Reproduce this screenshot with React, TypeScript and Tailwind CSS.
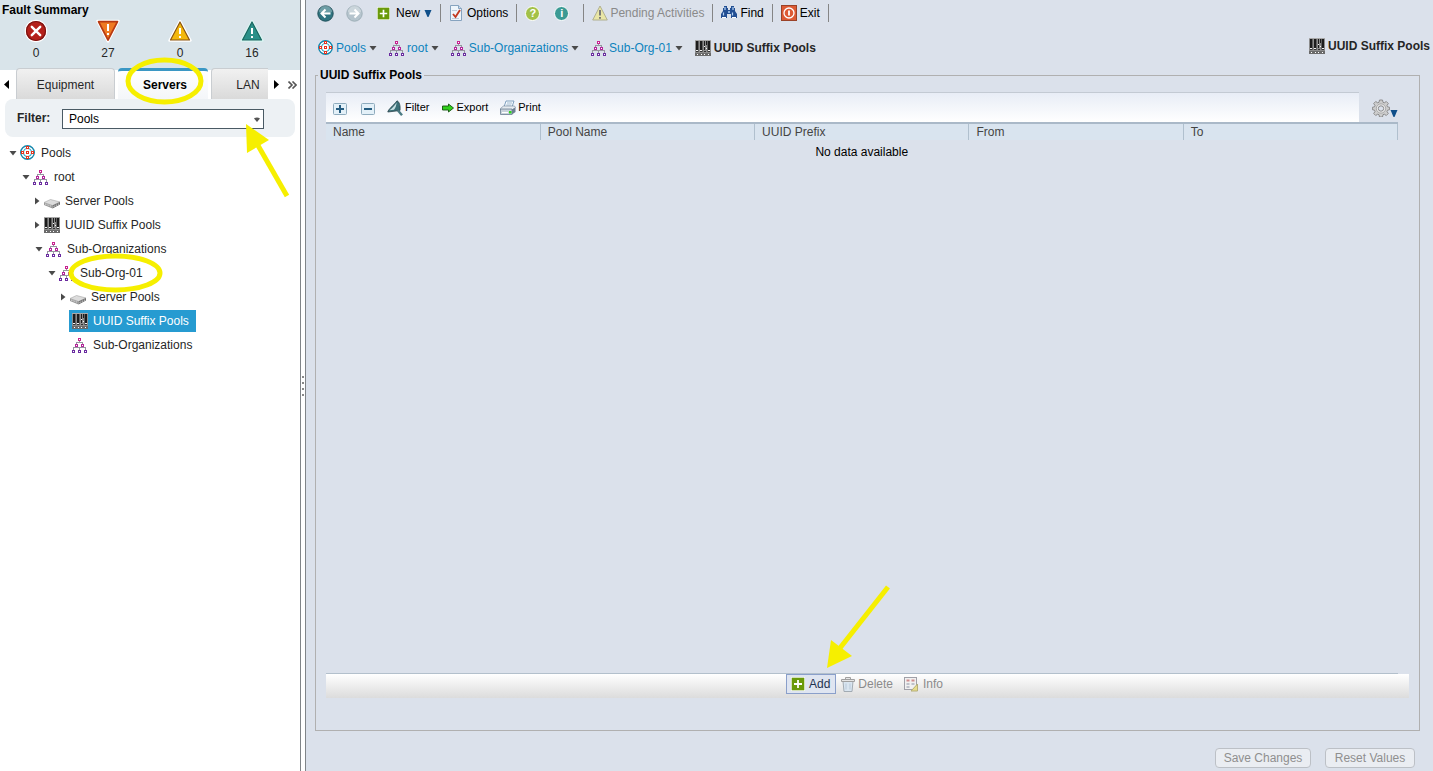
import { useState } from "react";
import type { ReactNode } from "react";

const tree = [
  { label: "Pools", icon: "pools", indent: "pl-[9px]", arrow: "down" },
  { label: "root", icon: "org", indent: "pl-[22px]", arrow: "down" },
  { label: "Server Pools", icon: "server", indent: "pl-[33px]", arrow: "right" },
  { label: "UUID Suffix Pools", icon: "uuid", indent: "pl-[33px]", arrow: "right" },
  { label: "Sub-Organizations", icon: "org", indent: "pl-[35px]", arrow: "down" },
  { label: "Sub-Org-01", icon: "org", indent: "pl-[48px]", arrow: "down" },
  { label: "Server Pools", icon: "server", indent: "pl-[59px]", arrow: "right" },
  { label: "UUID Suffix Pools", icon: "uuid", indent: "pl-[61px]", arrow: "" },
  { label: "Sub-Organizations", icon: "org", indent: "pl-[61px]", arrow: "" },
];

const columns = ["Name", "Pool Name", "UUID Prefix", "From", "To"];

function PoolsIcon() {
  return (
    <svg width="16" height="16" viewBox="0 0 16 16" className="shrink-0">
      <circle cx="7.5" cy="7.5" r="6.800" fill="#fff" stroke="#1588ad" strokeWidth="1.400" />
      <circle cx="7.5" cy="7.5" r="4" fill="none" stroke="#2aa3c4" strokeWidth="1.200" />
      <g fill="#e8321c">
        <path d="M6 1h3v3H6zM6 11h3v3H6zM1 6h3v3H1zM11 6h3v3h-3zM6 6h3v3H6z" />
      </g>
      <path d="M7 2h1v1H7zM7 12h1v1H7zM2 7h1v1H2zM12 7h1v1h-1zM7 7h1v1H7z" fill="#fff" />
    </svg>
  );
}

function OrgIcon() {
  return (
    <svg width="16" height="16" viewBox="0 0 16 16" className="shrink-0" shapeRendering="crispEdges">
      <path d="M7.500 4v2M4.500 8V5.500h6V8M1.500 13v-2.500h12V13M7.500 10.500V13M4.500 9v2M10.500 9v2" fill="none" stroke="#9696a0" />
      <path d="M6 1h3v3H6z" fill="#c8228f" />
      <path d="M3 7h3v3H3zM9 7h3v3H9z" fill="#b3269a" />
      <path d="M0 13h3v3H0zM6 13h3v3H6zM12 13h3v3h-3z" fill="#6a2ca0" />
      <path d="M7 2h1v1H7zM4 8h1v1H4zM10 8h1v1h-1zM1 14h1v1H1zM7 14h1v1H7zM13 14h1v1h-1z" fill="#fff" />
    </svg>
  );
}

function ServerIcon() {
  return (
    <svg width="16" height="16" viewBox="0 0 16 16" className="shrink-0">
      <path d="M0 9.500 6.500 6.500 16 9 8.500 12.500z" fill="#dcdcdc" stroke="#a5a5a5" strokeWidth=".6" />
      <path d="M0 9.500 8.500 12.500v3L0 12z" fill="#9a9a9a" />
      <path d="M8.500 12.500 16 9v2.600L8.500 15.500z" fill="#6e6e6e" />
      <path d="M1 11l6.500 2.300M9.500 13.600l5.500-2.700" stroke="#e2e2e2" strokeWidth=".9" strokeDasharray="1.500 1" />
    </svg>
  );
}

function UuidIcon() {
  return (
    <svg width="16" height="16" viewBox="0 0 16 16" className="shrink-0" shapeRendering="crispEdges">
      <rect width="16" height="16" fill="#8c8c8c" />
      <rect width="16" height="1" fill="#a8a8a8" />
      <path d="M1 1h2v9H1zM5 1h2v9H5zM9 1h1v9H9zM11 1h1v4h-1zM13 1h2v9h-2z" fill="#1c1c1c" />
      <path d="M3 1h1v11H3zM7 1h1v11H7zM12 1h1v11h-1z" fill="#606060" />
      <path d="M1 10h2v1H1zM5 10h2v1H5zM9 6h1v1H9zM11 8h1v1h-1zM13 10h2v1h-2z" fill="#f4f4f4" />
      <path d="M1 11h2v1H1zM5 11h2v1H5zM9 11h2v1H9zM13 11h2v1h-2z" fill="#333" />
      <rect y="13" width="16" height="3" fill="#6b6b6b" />
      <path d="M2 14h1v1H2zM6 14h1v1H6zM9 14h1v1H9zM13 14h1v1h-1z" fill="#fff" />
    </svg>
  );
}

function NodeIcon({ name }: { name: string }) {
  if (name === "pools") return <PoolsIcon />;
  if (name === "server") return <ServerIcon />;
  if (name === "uuid") return <UuidIcon />;
  return <OrgIcon />;
}

function Caret() {
  return (
    <svg width="8" height="6" viewBox="0 0 8 6" className="shrink-0">
      <path d="M.5 1h7L4 5.500z" fill="#4a4a4a" />
    </svg>
  );
}

function MenuCaret() {
  return (
    <svg width="8" height="7" viewBox="0 0 8 7" className="shrink-0">
      <path d="M.5 0h7L4.500 7h-1z" fill="#0f4f8a" />
    </svg>
  );
}

function PlusIcon({ size }: { size: number }) {
  return (
    <svg width={size} height={size} viewBox="0 0 14 14" className="shrink-0">
      <rect width="14" height="14" fill="#fff" />
      <rect x=".7" y=".7" width="12.600" height="12.600" fill="#6a9a0a" />
      <path d="M7 3v8M3 7h8" stroke="#fff" strokeWidth="1.800" />
    </svg>
  );
}

function ArrowCircle({ back }: { back?: boolean }) {
  const fill = back ? "#2f7480" : "#b5c4cd";
  return (
    <svg width="17" height="17" viewBox="0 0 17 17" className="shrink-0">
      <circle cx="8.500" cy="8.500" r="7.700" fill={fill} stroke={back ? "#20505a" : "#9eafb8"} />
      <path d="M2 7a6.500 6.500 0 0 1 13 0q-6.500 3-13 0z" fill="#fff" opacity=".3" />
      <path
        d={back ? "M13.500 8.500H4.500M8.500 4.500l-4 4 4 4" : "M3.500 8.500h9M8.500 4.500l4 4-4 4"}
        fill="none"
        stroke="#fff"
        strokeWidth="2"
      />
    </svg>
  );
}

function HelpCircle({ color, children }: { color: string; children: ReactNode }) {
  return (
    <span className={"flex size-[15px] items-center justify-center rounded-full border border-white text-[11px] font-bold leading-none text-white " + color}>
      {children}
    </span>
  );
}

function FaultIcon({ kind }: { kind: string }) {
  return (
    <svg width="24" height="24" viewBox="0 0 24 24">
      {kind === "critical" && (
        <>
          <circle cx="12" cy="12" r="10.700" fill="#b5201a" stroke="#fff" strokeWidth="1.200" />
          <circle cx="12" cy="12" r="9.500" fill="none" stroke="#7c1512" strokeWidth="1.200" />
          <path d="M7.800 7.800l8.400 8.400M16.200 7.800l-8.400 8.400" stroke="#fff" strokeWidth="2.400" strokeLinecap="round" />
        </>
      )}
      {kind === "major" && (
        <>
          <path d="M1.500 2h21L12 22.500z" fill="#fff" stroke="#fff" strokeWidth="2.500" strokeLinejoin="round" />
          <path d="M2.500 2.700h19L12 21z" fill="#ef7a22" stroke="#b83a12" strokeWidth="1.700" strokeLinejoin="round" />
          <path d="M12 5v7M12 14v2" stroke="#fff" strokeWidth="2" />
        </>
      )}
      {kind === "minor" && (
        <>
          <path d="M12 2 22.500 21.500h-21z" fill="#fff" stroke="#fff" strokeWidth="2.500" strokeLinejoin="round" />
          <path d="M12 3 21.500 21h-19z" fill="#f3b80d" stroke="#8a5410" strokeWidth="1.200" strokeLinejoin="round" />
          <path d="M12 9v6M12 17v2" stroke="#fff" strokeWidth="2" />
        </>
      )}
      {kind === "warning" && (
        <>
          <path d="M12 2 22.500 21.500h-21z" fill="#fff" stroke="#d9f5f2" strokeWidth="2.500" strokeLinejoin="round" />
          <path d="M12 3 21.500 21h-19z" fill="#2a9088" stroke="#17665f" strokeWidth="1.200" strokeLinejoin="round" />
          <path d="M12 9v6M12 17v2" stroke="#fff" strokeWidth="2" />
        </>
      )}
    </svg>
  );
}

const faults = [
  { kind: "critical", count: 0 },
  { kind: "major", count: 27 },
  { kind: "minor", count: 0 },
  { kind: "warning", count: 16 },
];

function OptionsIcon() {
  return (
    <svg width="14" height="16" viewBox="0 0 14 16" className="shrink-0">
      <path d="M1.500 .5h8l3 3v12h-11z" fill="#eef5fb" stroke="#86a3bf" />
      <path d="M9.500 .5v3h3" fill="#c8dcec" stroke="#86a3bf" />
      <path d="M3 5.500h5M3 13.500h7" stroke="#bccddc" />
      <path d="M4 9l2.500 3L11 5" fill="none" stroke="#c23a22" strokeWidth="1.900" />
    </svg>
  );
}

function PendingIcon() {
  return (
    <svg width="16" height="16" viewBox="0 0 16 16" className="shrink-0">
      <path d="M8 1 15.300 15H.7z" fill="#e9e6a6" stroke="#b0b090" strokeLinejoin="round" />
      <path d="M8 5v5.500M8 12v1.700" stroke="#777" strokeWidth="1.900" />
    </svg>
  );
}

function FindIcon() {
  return (
    <svg width="16" height="16" viewBox="0 0 16 16" className="shrink-0">
      <path d="M3 1h3v2h1v2h2V3h1V1h3v2h1v3l2 3v4h-6V9H6v4H0V9l2-3V3h1z" fill="#234f93" />
      <path d="M4 2v3M12 2v3M2.500 7.500v3M11.500 7.500v3" stroke="#b4d2f3" strokeWidth="1.200" />
      <path d="M1 12.500h4M11 12.500h4" stroke="#fff" strokeWidth="1.200" />
      <path d="M7 6h2v2H7z" fill="#8db1dc" />
    </svg>
  );
}

function ExitIcon() {
  return (
    <svg width="16" height="16" viewBox="0 0 16 16" className="shrink-0">
      <rect x=".5" y=".5" width="15" height="15" fill="#dd5a34" stroke="#9a4228" />
      <circle cx="8" cy="8" r="5" fill="none" stroke="#fff" strokeWidth="1.300" />
      <path d="M8 5.500v5" stroke="#fff" strokeWidth="1.800" />
    </svg>
  );
}

function FunnelIcon() {
  return (
    <svg width="16" height="16" viewBox="0 0 16 16" className="shrink-0">
      <path d="M10 .8c2.500 1.200 3.500 5 3 9.700L.8 12C1 9.500 7 5 10 .8z" fill="#3b7078" stroke="#29444c" strokeWidth=".8" />
      <path d="M9.500 2.500C8 5.500 5 8.500 2.500 10.300l4.500-.5c1.500-2 2.500-4.500 2.500-7.300z" fill="#c9e0e4" />
      <path d="M11 10.500l4 4.700" stroke="#4b7a83" strokeWidth="2.400" />
    </svg>
  );
}

function ExportIcon() {
  return (
    <svg width="12" height="10" viewBox="0 0 12 10" className="shrink-0">
      <path d="M.5 3h6V1L11.500 5 6.500 9V7h-6z" fill="#2fd01c" stroke="#14520e" strokeWidth=".9" />
    </svg>
  );
}

function PrintIcon() {
  return (
    <svg width="16" height="16" viewBox="0 0 16 16" className="shrink-0">
      <path d="M6 1h8l-2 6H4z" fill="#f5fafe" stroke="#7597b8" strokeWidth=".9" />
      <path d="M7 3h5M6.300 5h5" stroke="#9bb4cc" strokeWidth=".9" />
      <path d="M.5 8.500 3.500 6h11l1 1.500-3.500 2.500H.5z" fill="#e6ebf0" stroke="#7d91a4" strokeWidth=".7" />
      <path d="M.5 9h11.500v5.500H.5z" fill="#c9d2db" stroke="#6a7e92" strokeWidth=".8" />
      <path d="M12 9.500 15.500 7.500v4.500L12 14.500z" fill="#6d7f92" />
      <path d="M2 12.500h6" stroke="#fff" />
      <rect x="9" y="11" width="2.500" height="2.500" fill="#2fd51c" />
    </svg>
  );
}

function ExpandIcon({ plus }: { plus?: boolean }) {
  return (
    <svg width="14" height="12" viewBox="0 0 14 12" className="shrink-0">
      <rect x=".5" y=".5" width="13" height="11" rx="1" fill="#e3f0f8" stroke="#8eabbd" />
      <path d={plus ? "M7 2v8M3 6h8" : "M3 6h8"} stroke="#255c80" strokeWidth="2" />
    </svg>
  );
}

function GearIcon() {
  return (
    <svg width="18" height="18" viewBox="0 0 18 18" className="shrink-0">
      <path
        d="M7.500 1h3l.5 2.300 1.300.5 2-1.300 2 2-1.300 2 .5 1.300 2.100.5v2.400l-2.100.5-.5 1.300 1.300 2-2 2-2-1.300-1.300.5-.5 2.300h-3L7 15.700l-1.300-.5-2 1.300-2-2 1.300-2-.5-1.300L.4 10.700V8.300l2.100-.5.5-1.300-1.300-2 2-2 2 1.300L7 3.300z"
        fill="#cdcdcd"
        stroke="#858585"
        strokeWidth=".9"
      />
      <circle cx="9" cy="9.500" r="4.600" fill="#eee" stroke="#9b9b9b" strokeWidth=".8" />
      <circle cx="9" cy="9.500" r="2.700" fill="#dbe1eb" stroke="#808080" strokeWidth=".9" />
    </svg>
  );
}

function TrashIcon() {
  return (
    <svg width="14" height="15" viewBox="0 0 14 15" className="shrink-0">
      <path d="M2 4.500h10l-1 10H3z" fill="#d9e5f0" stroke="#a2abb3" />
      <path d="M.5 2.500h13v2H.5zM4.500 2.500v-2h5v2" fill="#e6e6e6" stroke="#a0a0a0" />
      <path d="M5 6.500v6M9 6.500v6" stroke="#b9c9d9" />
    </svg>
  );
}

function InfoIcon() {
  return (
    <svg width="15" height="15" viewBox="0 0 15 15" className="shrink-0">
      <rect x=".5" y=".5" width="12" height="12" fill="#f1f1f1" stroke="#a0a0a8" />
      <path d="M2.500 3.500h3M7.500 3.500h3" stroke="#cf8d8d" strokeWidth="2" />
      <path d="M2.500 7h3M7.500 7h3M2.500 10h3" stroke="#adb1bd" strokeWidth="1.500" />
      <path d="M13.500 7v7H7z" fill="#e7dd8b" stroke="#b5ae78" />
    </svg>
  );
}

function Separator() {
  return <div className="h-[18px] w-px shrink-0 bg-[#858585]" />;
}

function Crumb({ icon, label }: { icon: string; label: string }) {
  return (
    <div className="flex items-center gap-[3px]">
      <a href="#" className="flex items-center gap-[2px] text-[#0d83bd]">
        <NodeIcon name={icon} />
        {label}
      </a>
      <Caret />
    </div>
  );
}

function Sidebar() {
  const [selected, setSelected] = useState(7);

  return (
    <aside className="relative w-[300px] shrink-0 bg-white">
      <div className="h-[70px] bg-[#d9e4ea] pt-[2px]">
        <h2 className="pl-[2px] font-bold leading-4 text-black">Fault Summary</h2>
        <div className="grid grid-cols-4 pr-3 pt-px">
          {faults.map((fault) => (
            <div key={fault.kind} className="flex flex-col items-center leading-5">
              <FaultIcon kind={fault.kind} />
              {fault.count}
            </div>
          ))}
        </div>
      </div>

      <div className="-mt-[2px] flex h-[31px] items-stretch">
        <button aria-label="Scroll tabs left" className="flex w-4 items-center pl-1 pt-[2px]">
          <svg width="5" height="9" viewBox="0 0 5 9">
            <path d="M5 0v9L0 4.500z" fill="#000" />
          </svg>
        </button>
        <div className="flex w-[252px] gap-[3px] overflow-hidden">
          <button className="w-[99px] shrink-0 rounded-t border border-b-0 border-[#c9cdd1] bg-linear-to-b from-[#f1f1f1] to-[#dadada] pt-[2px]">
            Equipment
          </button>
          <button className="w-[90px] shrink-0 rounded-t border-t-3 border-[#3a97c4] bg-linear-to-b from-white to-[#f4f6f9] pl-1 font-bold text-black">
            Servers
          </button>
          <button className="w-[74px] shrink-0 rounded-t border border-b-0 border-[#c9cdd1] bg-linear-to-b from-[#f1f1f1] to-[#dadada] pt-[2px]">
            LAN
          </button>
        </div>
        <button aria-label="Scroll tabs right" className="flex w-[18px] items-center pl-[6px] pt-[2px]">
          <svg width="5" height="9" viewBox="0 0 5 9">
            <path d="M0 0v9l5-4.500z" fill="#000" />
          </svg>
        </button>
        <button aria-label="More tabs" className="pl-[2px] pt-[2px]">
          <svg width="9" height="8" viewBox="0 0 9 8">
            <path d="M.5.500 4 4 .5 7.500M4.500.500 8 4 4.500 7.500" fill="none" stroke="#555" strokeWidth="1.600" />
          </svg>
        </button>
      </div>

      <div className="mx-[5px] flex h-[38px] items-center rounded-lg bg-[#edf1f4] pl-3">
        <label htmlFor="filter" className="w-[45px] font-bold">
          Filter:
        </label>
        <div className="relative pt-[2px]">
          <select id="filter" className="block h-5 w-[202px] appearance-none border border-[#4a5a64] bg-white pl-[6px] text-black">
            <option>Pools</option>
          </select>
          <svg width="6" height="5" viewBox="0 0 6 5" className="pointer-events-none absolute right-1 top-[10px]">
            <path d="M0 1.500Q3-.5 6 1.500L3 5z" fill="#555" />
          </svg>
        </div>
      </div>

      <ul className="pt-1">
        {tree.map((node, i) => (
          <li key={i} className={"flex h-6 items-center " + node.indent}>
            <span className="flex w-2 shrink-0 justify-center">
              {node.arrow === "down" && <Caret />}
              {node.arrow === "right" && (
                <svg width="5" height="8" viewBox="0 0 5 8">
                  <path d="M0 .5v7L4.500 4z" fill="#4a4a4a" />
                </svg>
              )}
            </span>
            <button
              onClick={() => setSelected(i)}
              className={
                "flex h-[22px] items-center gap-[5px] " +
                (selected === i ? "bg-[#269bd1] pl-[3px] pr-[7px] text-white" : "px-[3px]")
              }
            >
              <NodeIcon name={node.icon} />
              {node.label}
            </button>
          </li>
        ))}
      </ul>

      <svg width="300" height="300" viewBox="0 0 300 300" className="pointer-events-none absolute left-0 top-0">
        <g fill="none" stroke="#f6ef00" strokeWidth="5">
          <ellipse cx="164.500" cy="81" rx="36.500" ry="21" />
          <ellipse cx="115.500" cy="273" rx="44.500" ry="17" />
          <path d="M287 196 256 142" />
        </g>
        <path d="M246 124l1 29 22-13z" fill="#f6ef00" />
      </svg>
    </aside>
  );
}

function Toolbar() {
  return (
    <div className="flex h-[26px] items-center gap-2 pl-[11px] text-black">
      <button aria-label="Back">
        <ArrowCircle back />
      </button>
      <button aria-label="Forward" className="pl-1">
        <ArrowCircle />
      </button>
      <button className="flex items-center pl-[6px]">
        <PlusIcon size={13} />
        <span className="pl-[6px] pr-1">New</span>
        <MenuCaret />
      </button>
      <Separator />
      <button className="flex items-center gap-1">
        <OptionsIcon />
        Options
      </button>
      <Separator />
      <button aria-label="Help">
        <HelpCircle color="bg-[#a3c148]">?</HelpCircle>
      </button>
      <button aria-label="About" className="px-[6px]">
        <HelpCircle color="bg-[#3a9a94]">i</HelpCircle>
      </button>
      <Separator />
      <button className="flex items-center gap-[2px] text-[#8a8a8a]">
        <PendingIcon />
        Pending Activities
      </button>
      <Separator />
      <button className="flex items-center gap-[3px]">
        <FindIcon />
        Find
      </button>
      <Separator />
      <button className="flex items-center gap-[3px]">
        <ExitIcon />
        Exit
      </button>
      <Separator />
    </div>
  );
}

function PoolTable() {
  return (
    <fieldset className="ml-[9px] mr-[13px] flex min-w-0 flex-1 flex-col border border-[#b0b0b0] px-[10px] pb-8 pt-[9px]">
      <legend className="-ml-2 px-[2px] font-bold leading-4 text-black">UUID Suffix Pools</legend>
      <div className="flex h-[30px] items-center">
        <div className="flex h-full flex-1 items-center border-t border-[#c3cad3] bg-linear-to-b from-[#e8edf6] to-white pl-[7px] text-[11px] text-black">
          <button aria-label="Expand all" className="pt-[3px]">
            <ExpandIcon plus />
          </button>
          <button aria-label="Collapse all" className="pl-[14px] pt-[3px]">
            <ExpandIcon />
          </button>
          <button className="flex items-center gap-[2px] pl-3">
            <FunnelIcon />
            Filter
          </button>
          <button className="flex items-center gap-[2px] pl-[13px]">
            <ExportIcon />
            Export
          </button>
          <button className="flex items-center gap-[2px] pl-3">
            <PrintIcon />
            Print
          </button>
        </div>
        <button aria-label="Table settings" className="flex w-[50px] items-end pl-[13px] pt-[2px]">
          <GearIcon />
          <MenuCaret />
        </button>
      </div>
      <div className="flex-1 pr-[11px]">
        <table className="w-full table-fixed border-t-2 border-[#aab9c8]">
          <thead>
            <tr className="bg-[#d9e4ef]">
              {columns.map((column) => (
                <th key={column} className="border-r border-[#b0c0ce] pl-[7px] text-left font-normal leading-4 text-[#444]">
                  {column}
                </th>
              ))}
            </tr>
          </thead>
          <tbody>
            <tr>
              <td colSpan={5} className="pt-1 text-center leading-4 text-black">
                No data available
              </td>
            </tr>
          </tbody>
        </table>
      </div>
      <div className="mr-[11px] h-px bg-[#b3c0cc]" />
      <div className="flex h-6 items-start justify-center bg-linear-to-b from-white to-[#dcdcdc] pr-[6px]">
        <button className="flex h-5 items-center gap-1 border border-[#8a9fca] bg-[#dfe5f1] pl-1 pr-[5px] text-[#1f3350]">
          <PlusIcon size={14} />
          Add
        </button>
        <button className="flex h-5 items-center gap-[3px] pl-[5px] text-[#8b8b8b]">
          <TrashIcon />
          Delete
        </button>
        <button className="flex h-5 items-center gap-1 pl-[11px] text-[#8b8b8b]">
          <InfoIcon />
          Info
        </button>
      </div>
    </fieldset>
  );
}

export default function App() {
  return (
    <div className="relative flex min-h-screen overflow-hidden bg-[#dbe1eb] font-['Liberation_Sans',Arial,sans-serif] text-xs text-[#262626]">
      <Sidebar />
      <div className="flex w-[6px] shrink-0 flex-col items-center justify-center gap-1 border-x border-[#808488] bg-white">
        {[0, 1, 2, 3].map((dot) => (
          <span key={dot} className="size-[2px] bg-[#888]" />
        ))}
      </div>

      <main className="flex min-w-0 flex-1 flex-col">
        <Toolbar />
        <nav className="flex h-[41px] items-center gap-3 pl-3 pr-[3px] pt-[3px]">
          <Crumb icon="pools" label="Pools" />
          <Crumb icon="org" label="root" />
          <Crumb icon="org" label="Sub-Organizations" />
          <Crumb icon="org" label="Sub-Org-01" />
          <span className="flex items-center gap-[3px] font-bold">
            <UuidIcon />
            UUID Suffix Pools
          </span>
          <span className="ml-auto flex items-center gap-[3px] pb-[5px] font-bold">
            <UuidIcon />
            UUID Suffix Pools
          </span>
        </nav>
        <PoolTable />
        <div className="flex justify-end gap-[14px] pb-[3px] pr-[18px] pt-[17px]">
          <button className="h-5 w-24 rounded border border-[#bcc0c6] bg-[#eaedf2] text-[#8f8f8f]">Save Changes</button>
          <button className="h-5 w-[90px] rounded border border-[#bcc0c6] bg-[#eaedf2] text-[#8f8f8f]">Reset Values</button>
        </div>
      </main>

      <svg width="64" height="84" viewBox="0 0 64 84" className="pointer-events-none absolute bottom-[102px] left-[826px]">
        <path d="M62 2 14 63" stroke="#f6ef00" strokeWidth="5" />
        <path d="M1 83 5 55l21 16z" fill="#f6ef00" />
      </svg>
    </div>
  );
}
